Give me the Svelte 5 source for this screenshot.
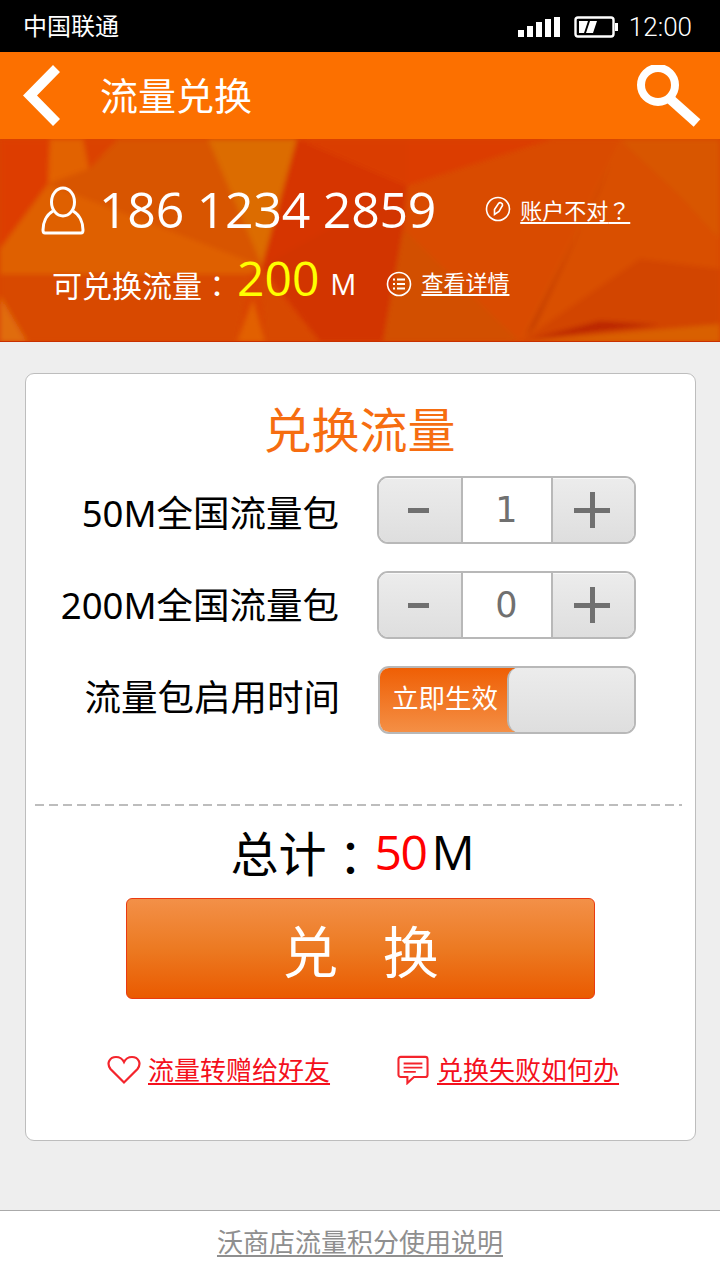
<script>
	// static recreation of the data exchange screen
	const packs = [
		{ name: '50M全国流量包', qty: 1 },
		{ name: '200M全国流量包', qty: 0 }
	];
	// faceted banner background, hero-local coordinates
	const shards = [
		{ p: '0,0 50,0 48,45 0,110', c: '#dd3c00' },
		{ p: '50,0 83,0 89,30 48,45', c: '#e26200' },
		{ p: '83,0 118,0 89,30', c: '#db4200' },
		{ p: '118,0 208,0 262,127 48,45 89,30', c: '#d85400' },
		{ p: '0,110 48,45 262,127 250,135 0,135', c: '#df6000' },
		{ p: '0,135 250,135 237,203 27,203 0,157', c: '#d84800' },
		{ p: '0,157 27,203 0,203', c: '#e06c10' },
		{ p: '237,203 253,160 265,203', c: '#e26000' },
		{ p: '265,203 260,133 320,203', c: '#d84a00' },
		{ p: '208,0 297,0 262,127', c: '#dc6c00' },
		{ p: '297,0 407,47 312,125 262,127', c: '#d63400' },
		{ p: '305,120 340,92 322,126', c: '#c42400' },
		{ p: '262,127 407,47 403,90 383,203 320,203', c: '#d23400' },
		{ p: '297,0 407,0 407,47', c: '#da3c00' },
		{ p: '407,0 553,0 407,47', c: '#dc3c00' },
		{ p: '407,47 553,0 620,0 520,203 403,90', c: '#d94c00' },
		{ p: '403,90 520,203 383,203', c: '#d25000' },
		{ p: '620,0 720,0 720,185 520,203', c: '#d95000' },
		{ p: '620,0 720,0 720,100 680,56', c: '#d85600' },
		{ p: '520,203 640,120 720,130 720,185', c: '#d24400' },
		{ p: '530,200 600,192 660,186 600,182', c: '#bb2800' },
		{ p: '520,203 720,185 720,203', c: '#d96000' },
		{ p: '598,55 612,22 535,188 525,198', c: '#c43c00' }
	];
</script>

<div class="page">
	<div class="status">
		<span class="carrier">中国联通</span>
		<div class="status-right">
			<svg width="44" height="22" viewBox="0 0 44 22" fill="#fff">
				<rect x="1" y="14" width="6" height="7" />
				<rect x="10" y="10" width="6" height="11" />
				<rect x="19" y="6" width="6" height="15" />
				<rect x="28" y="3" width="6" height="18" />
				<rect x="37" y="1" width="6" height="20" />
			</svg>
			<svg class="battery" width="46" height="22" viewBox="0 0 46 22">
				<rect x="1.5" y="1.5" width="38" height="19" rx="2.5" fill="none" stroke="#fff" stroke-width="2.4" />
				<path d="M5 5h9l-4 12H5zM16 5h7l-4 12h-7z" fill="#fff" />
				<path d="M41 7h3v8h-3z" fill="#fff" />
			</svg>
			<span class="clock">12:00</span>
		</div>
	</div>

	<div class="toolbar">
		<svg class="back" width="40" height="62" viewBox="0 0 40 62" fill="#fff">
			<path d="M32 0 L39 7 L16 30.500 L39 54 L32 61 L2 30.500 Z" />
		</svg>
		<span class="title">流量兑换</span>
		<svg class="search" width="68" height="62" viewBox="0 0 68 62">
			<circle cx="22" cy="20" r="17" fill="none" stroke="#fff" stroke-width="8" />
			<path d="M33 33 L61 58" fill="none" stroke="#fff" stroke-width="10" />
		</svg>
	</div>

	<div class="hero">
		<svg class="hero-bg" width="720" height="203" viewBox="0 0 720 203">
			<defs>
				<filter id="soft" x="-5%" y="-5%" width="110%" height="110%">
					<feGaussianBlur stdDeviation="2.5" />
				</filter>
			</defs>
			<rect width="720" height="203" fill="#d94400" />
			<g filter="url(#soft)">
				{#each shards as s}
					<polygon points={s.p} fill={s.c} />
				{/each}
			</g>
			<rect y="202" width="720" height="1" fill="#c83000" />
		</svg>
		<div class="account">
			<svg class="person" width="44" height="50" viewBox="0 0 44 50" fill="none" stroke="#fff" stroke-width="3">
				<ellipse cx="22" cy="16" rx="11.500" ry="14" />
				<path d="M12 25 C5 29 2 37 2 44 C2 46 3 47 4 47 H40 C41 47 42 46 42 44 C42 37 39 29 32 25" />
			</svg>
			<span class="phone">186 1234 2859</span>
			<svg class="small-icon" width="26" height="26" viewBox="0 0 26 26" fill="none" stroke="#fff" stroke-width="1.6">
				<circle cx="13" cy="13" r="11.500" />
				<path d="M9.500 18.500 L9.500 13.500 L13.500 7.500 C15 5.800 18 7 17.500 9.500 L14 15.500 Z" />
			</svg>
			<span class="hero-link">账户不对<span class="tc">？</span></span>
		</div>
		<div class="balance">
			<span class="balance-label">可兑换流量<span class="tc">：</span></span>
			<span class="balance-num">200</span>
			<span class="balance-unit">M</span>
			<svg class="small-icon detail" width="26" height="26" viewBox="0 0 26 26" fill="none" stroke="#fff" stroke-width="1.6">
				<circle cx="13" cy="13" r="11.500" />
				<path d="M7 8.500h2M7 13h2M7 17.500h2M11 8.500h8M11 13h8M11 17.500h8" stroke-width="2" />
			</svg>
			<span class="hero-link low">查看详情</span>
		</div>
	</div>

	<div class="main">
		<div class="card">
			<h1>兑换流量</h1>
			<div class="form">
				{#each packs as pack}
					<div class="row">
						<span class="label">{pack.name}</span>
						<div class="stepper">
							<div class="step">
								<span class="minus"></span>
							</div>
							<div class="qty">{pack.qty}</div>
							<div class="step">
								<span class="plus"></span>
							</div>
						</div>
					</div>
				{/each}
				<div class="row">
					<span class="label">流量包启用时间</span>
					<div class="toggle">
						<div class="toggle-on">立即生效</div>
						<div class="toggle-off"></div>
					</div>
				</div>
			</div>
			<div class="divider"></div>
			<div class="total">
				<span>总计<span class="tc sum-colon">：</span></span><span class="total-num">50</span><span class="total-unit">M</span>
			</div>
			<button type="button" class="submit">兑 换</button>
			<div class="links">
				<div class="link">
					<svg width="34" height="30" viewBox="0 0 34 30" fill="none" stroke="#f4242c" stroke-width="2.2">
						<path d="M17 27.500 L3.500 14 C-1 8 3 2 9 2 C12.500 2 15.500 4 17 7 C18.500 4 21.500 2 25 2 C31 2 35 8 30.500 14 Z" />
					</svg>
					<span>流量转赠给好友</span>
				</div>
				<div class="link">
					<svg width="34" height="30" viewBox="0 0 34 32" fill="none" stroke="#f4242c" stroke-width="2.2">
						<path d="M4 2 H30 C31.500 2 32.500 3 32.500 4.500 V21 C32.500 22.500 31.500 23.500 30 23.500 H18 L11 30 V23.500 H4 C2.500 23.500 1.500 22.500 1.500 21 V4.500 C1.500 3 2.500 2 4 2 Z" />
						<path d="M7 9 H27 M7 13.500 H27 M7 18 H20" stroke-width="2" />
					</svg>
					<span>兑换失败如何办</span>
				</div>
			</div>
		</div>
	</div>

	<div class="footer"><span>沃商店流量积分使用说明</span></div>
</div>

<style>
	:global(body) {
		background: #eeeeee;
	}

	.page {
		width: 720px;
		height: 1280px;
		display: flex;
		flex-direction: column;
		overflow: hidden;
		background: #eeeeee;
		font-family: "Noto Sans", "Noto Sans CJK SC", sans-serif;
		color: #000;
	}

	/* the TC cut centres its fullwidth punctuation */
	.tc {
		font-family: "Noto Sans CJK TC", sans-serif;
	}

	.sum-colon {
		display: inline-block;
		transform: translateY(4px);
	}

	.status {
		height: 52px;
		flex: none;
		background: #000;
		color: #fff;
		display: flex;
		align-items: center;
		justify-content: space-between;
		padding: 0 28px 0 23px;
	}

	.carrier {
		font-size: 24px;
		line-height: 52px;
	}

	.status-right {
		display: flex;
		align-items: center;
		padding-top: 2px;
	}

	.battery {
		margin: 0 9px 0 13px;
	}

	.clock {
		font-family: "Roboto", sans-serif;
		font-weight: 300;
		font-size: 26px;
	}

	.toolbar {
		height: 87px;
		flex: none;
		background: #fc7000;
		color: #fff;
		display: flex;
		align-items: center;
		padding: 0 16px 0 21px;
	}

	.back {
		flex: none;
	}

	.title {
		font-size: 38px;
		margin-left: 39px;
		flex: 1;
		line-height: 87px;
	}

	.search {
		flex: none;
	}

	.hero {
		position: relative;
		height: 203px;
		flex: none;
		color: #fff;
		overflow: hidden;
		padding: 43px 0 0 41px;
		box-sizing: border-box;
	}

	.hero-bg {
		position: absolute;
		inset: 0;
	}

	.account,
	.balance {
		position: relative;
		display: flex;
		align-items: center;
	}

	.account {
		height: 54px;
	}

	.person {
		flex: none;
		margin-top: 4px;
	}

	.phone {
		font-family: "Open Sans", sans-serif;
		font-size: 50px;
		line-height: 54px;
		margin-left: 14px;
		white-space: nowrap;
		letter-spacing: -0.25px;
	}

	.small-icon {
		flex: none;
		margin-left: 49px;
		margin-right: 9px;
	}

	.small-icon.detail {
		margin: 14px 9px 0 30px;
	}

	.hero-link {
		font-size: 22px;
		text-decoration: underline;
		text-underline-offset: 3px;
		text-decoration-thickness: 2px;
		white-space: nowrap;
	}

	.hero-link.low {
		padding-top: 8px;
	}

	.balance {
		height: 56px;
		margin: 13px 0 0 11px;
	}

	.balance-label {
		font-size: 30px;
		white-space: nowrap;
		padding-top: 14px;
	}

	.balance-num {
		font-family: "Open Sans", sans-serif;
		font-size: 48px;
		color: #ffff00;
		margin-left: 5px;
	}

	.balance-unit {
		font-family: "Open Sans", sans-serif;
		font-size: 29px;
		margin-left: 11px;
		padding-top: 12px;
	}

	.main {
		flex: 1;
		padding: 31px 24px 0 25px;
	}

	.card {
		height: 768px;
		box-sizing: border-box;
		background: #fff;
		border: 1px solid #bdbdbd;
		border-radius: 9px;
		display: flex;
		flex-direction: column;
		align-items: center;
	}

	h1 {
		margin: 26px 2px 0 0;
		font-size: 48px;
		font-weight: 400;
		line-height: 60px;
		color: #f66d10;
	}

	.form {
		width: 100%;
		box-sizing: border-box;
		padding: 16px 59px 0 0;
		display: flex;
		flex-direction: column;
		gap: 27px;
	}

	.row {
		display: flex;
		align-items: center;
		justify-content: flex-end;
	}

	.label {
		font-size: 36.5px;
		margin-right: 38px;
		white-space: nowrap;
	}

	.row:nth-child(1) .label {
		padding-top: 2px;
	}

	.row:nth-child(2) .label {
		padding-bottom: 4px;
	}

	.row:nth-child(3) .label {
		padding-bottom: 10px;
	}

	.stepper {
		width: 259px;
		height: 68px;
		box-sizing: border-box;
		border: 2px solid #b8b8b8;
		border-radius: 11px;
		display: flex;
		overflow: hidden;
	}

	.step {
		flex: 1;
		display: flex;
		align-items: center;
		justify-content: center;
		background: linear-gradient(#ececec, #dedede);
		box-shadow: inset 0 1px 0 #f8f8f8;
	}

	.qty {
		width: 92px;
		flex: none;
		background: #fff;
		border-left: 2px solid #b8b8b8;
		border-right: 2px solid #b8b8b8;
		box-sizing: border-box;
		text-align: center;
		font-family: "DejaVu Sans", sans-serif;
		font-size: 35px;
		line-height: 64px;
		color: #707070;
	}

	.minus {
		width: 21px;
		height: 5px;
		margin-right: 2px;
		background: #707070;
	}

	.plus {
		width: 36px;
		height: 36px;
		margin-right: 2px;
		background:
			linear-gradient(#707070, #707070) center / 100% 5px no-repeat,
			linear-gradient(#707070, #707070) center / 5px 100% no-repeat;
	}

	.toggle {
		width: 258px;
		height: 68px;
		box-sizing: border-box;
		border: 2px solid #b8b8b8;
		border-radius: 11px;
		display: flex;
		overflow: hidden;
	}

	.toggle-on {
		width: 135px;
		flex: none;
		background: linear-gradient(#ef5f05, #f48f45);
		color: #fff;
		font-size: 26.5px;
		line-height: 60px;
		padding-left: 12px;
		box-sizing: border-box;
		white-space: nowrap;
	}

	.toggle-off {
		flex: 1;
		margin-left: -8px;
		background: linear-gradient(#ececec, #dedede);
		border-left: 2px solid #b8b8b8;
		border-radius: 11px 0 0 11px;
	}

	.divider {
		width: 647px;
		height: 2px;
		margin: 70px 4px 0 0;
		background: repeating-linear-gradient(90deg, #bdbdbd 0 9px, transparent 9px 14px);
	}

	.total {
		margin: 14px 16px 0 0;
		height: 64px;
		font-size: 48px;
		line-height: 64px;
		white-space: nowrap;
		display: flex;
		align-items: center;
	}

	.total-num {
		font-family: "Open Sans", sans-serif;
		color: #ff0000;
		margin: 0 5px 0 0;
		letter-spacing: -1.5px;
	}

	.total-unit {
		font-family: "Open Sans", sans-serif;
	}

	.submit {
		width: 469px;
		height: 101px;
		margin-top: 14px;
		flex: none;
		background: linear-gradient(#f39048, #ec7a22 50%, #ea5a00);
		border: 1px solid #ea3a10;
		border-radius: 6px;
		color: #fff;
		font-family: inherit;
		font-size: 56px;
		word-spacing: 30px;
		padding: 0;
	}

	.links {
		margin-top: 51px;
		width: 100%;
		display: flex;
		padding-left: 81px;
		box-sizing: border-box;
		gap: 66px;
	}

	.link {
		display: flex;
		align-items: center;
		gap: 7px;
		color: #f4101c;
		font-size: 26px;
		white-space: nowrap;
	}

	.link svg {
		margin-top: 2px;
	}

	.link span {
		text-decoration: underline;
		text-underline-offset: 3px;
	}

	.footer {
		height: 70px;
		flex: none;
		background: #fff;
		border-top: 1px solid #aaaaaa;
		box-sizing: border-box;
		padding-bottom: 9px;
		display: flex;
		align-items: center;
		justify-content: center;
		color: #8f8f8f;
		font-size: 26px;
		text-decoration: underline;
		text-underline-offset: 3px;
	}
</style>
